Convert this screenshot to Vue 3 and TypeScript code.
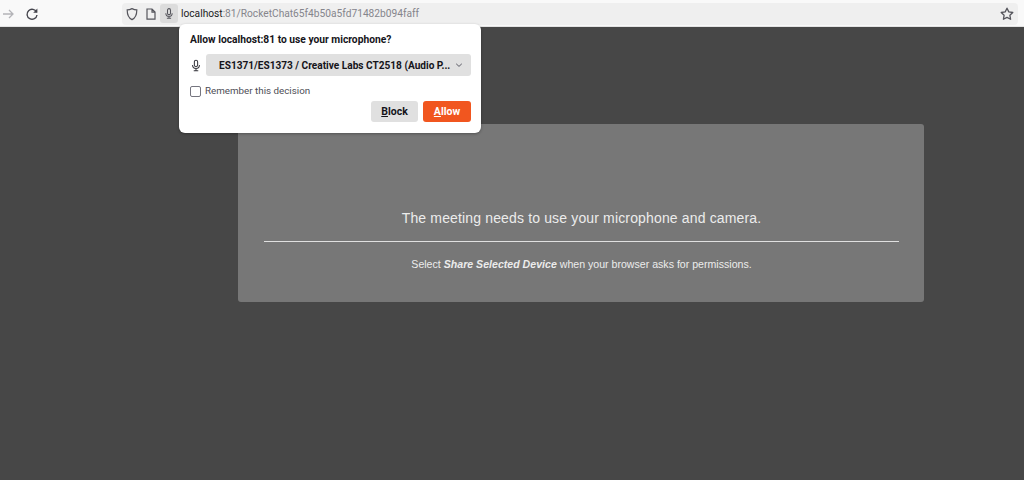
<script setup lang="ts">
const origin = 'localhost'
const path = ':81/RocketChat65f4b50a5fd71482b094faff'
const device = 'ES1371/ES1373 / Creative Labs CT2518 (Audio P...'
</script>

<template>
  <div class="page">
    <header class="toolbar">
      <div class="nav-btns">
        <svg class="icon" width="16" height="16" viewBox="0 0 16 16">
          <path d="M3 8h10M9 4l4 4-4 4" fill="none" stroke="#b4b4b8" stroke-width="1.3" />
        </svg>
        <svg class="icon" width="16" height="16" viewBox="0 0 16 16">
          <path d="M12.6 6.2A5 5 0 1 0 13 9" fill="none" stroke="#45454d" stroke-width="1.4" />
          <path d="M13.4 2.6v4.2H9.2z" fill="#45454d" />
        </svg>
      </div>
      <div class="urlbar">
        <svg class="icon" width="16" height="16" viewBox="0 0 16 16">
          <path d="M8 2.6c1.7.9 3.2 1.3 4.8 1.3 0 4.8-1.3 8-4.8 9.7-3.5-1.7-4.8-4.9-4.8-9.7 1.6 0 3.1-.4 4.8-1.3z" fill="none" stroke="#55555c" stroke-width="1.2" />
        </svg>
        <svg class="icon page-icon" width="16" height="16" viewBox="0 0 16 16">
          <path d="M4 3h5l3 3v7.2H4zM9 3v3.2h3" fill="none" stroke="#55555c" stroke-width="1.2" />
        </svg>
        <span class="mic-box">
          <svg width="12" height="13" viewBox="0 0 16 16">
            <rect x="6" y="1.5" width="4" height="8" rx="2" fill="none" stroke="#55555c" stroke-width="1.4" />
            <path d="M3.8 7.5a4.2 4.2 0 0 0 8.4 0M8 11.8v2.4M5.2 14.4h5.6" fill="none" stroke="#55555c" stroke-width="1.4" />
          </svg>
        </span>
        <span class="url"><span class="host">{{ origin }}</span>{{ path }}</span>
        <svg class="icon star" width="16" height="16" viewBox="0 0 16 16">
          <path d="M8 2.2l1.8 3.7 4 .6-2.9 2.8.7 4L8 11.4l-3.6 1.9.7-4-2.9-2.8 4-.6z" fill="none" stroke="#55555c" stroke-width="1.3" stroke-linejoin="round" />
        </svg>
      </div>
    </header>

    <main class="content">
      <section class="card">
        <h1>The meeting needs to use your microphone and camera.</h1>
        <hr />
        <p>Select <b><i>Share Selected Device</i></b> when your browser asks for permissions.</p>
      </section>
    </main>

    <div class="popup">
      <div class="popup-title">Allow localhost:81 to use your microphone?</div>
      <div class="device-row">
        <svg width="12" height="13" viewBox="0 0 12 16">
          <rect x="4" y="1.5" width="4" height="8" rx="2" fill="none" stroke="#3a3a40" stroke-width="1.3" />
          <path d="M1.8 7.5a4.2 4.2 0 0 0 8.4 0M6 11.8v2.4M3.2 14.4h5.6" fill="none" stroke="#3a3a40" stroke-width="1.3" />
        </svg>
        <div class="select">
          <span>{{ device }}</span>
          <svg width="8" height="8" viewBox="0 0 8 8">
            <path d="M1.2 2.8L4 5.4l2.8-2.6" fill="none" stroke="#5b5b66" stroke-width="1" />
          </svg>
        </div>
      </div>
      <label class="remember"><span class="box"></span>Remember this decision</label>
      <div class="actions">
        <button class="btn"><u>B</u>lock</button>
        <button class="btn primary"><u>A</u>llow</button>
      </div>
    </div>
  </div>
</template>

<style scoped>
.page {
  position: relative;
  width: 1024px;
  height: 480px;
  overflow: hidden;
  background: #474747;
  font-family: Roboto, "Noto Sans", sans-serif;
}

.toolbar {
  display: flex;
  align-items: center;
  height: 27px;
  box-sizing: border-box;
  padding: 2px 6px 1px 0;
  background: #f9f9f9;
  border-bottom: 1px solid #e3e3e3;
}

.nav-btns {
  display: flex;
  align-items: center;
  gap: 8px;
  width: 122px;
}

.icon {
  flex: none;
}

.urlbar {
  flex: 1;
  display: flex;
  align-items: center;
  height: 22px;
  box-sizing: border-box;
  padding: 0 3px 0 2px;
  background: #efefef;
  border-radius: 4px;
}

.page-icon {
  margin-left: 3px;
}

.mic-box {
  display: flex;
  align-items: center;
  justify-content: center;
  width: 18px;
  height: 19px;
  margin-left: 1px;
  background: #dcdcdc;
  border-radius: 3px;
}

.url {
  margin-left: 3px;
  font-size: 10.2px;
  color: #85858c;
  white-space: nowrap;
}

.host {
  color: #1c1b22;
}

.star {
  margin-left: auto;
}

.content {
  padding: 97px 0 0 238px;
}

.card {
  width: 686px;
  height: 178px;
  box-sizing: border-box;
  padding: 85px 25px 0 26px;
  background: #777777;
  border-radius: 3px;
  text-align: center;
  color: #ececec;
  font-family: "Liberation Sans", Arial, sans-serif;
}

h1 {
  margin: 0;
  font-size: 14px;
  font-weight: 400;
  line-height: 18px;
  letter-spacing: 0.15px;
}

hr {
  margin: 14px 0 0;
  height: 1px;
  border: 0;
  background: #e0e0e0;
}

p {
  margin: 15px 0 0;
  font-size: 10.6px;
  line-height: 14px;
}

.popup {
  position: absolute;
  left: 179px;
  top: 24px;
  width: 302px;
  height: 109px;
  box-sizing: border-box;
  padding: 10px 10px 10px 11px;
  background: #fff;
  border-radius: 6px;
  box-shadow: 0 1px 3px rgba(0, 0, 0, 0.3);
  color: #15141a;
}

.popup-title {
  font-size: 10.25px;
  font-weight: 700;
  line-height: 12px;
}

.device-row {
  display: flex;
  align-items: center;
  gap: 4px;
  margin-top: 8px;
}

.select {
  display: flex;
  align-items: center;
  justify-content: space-between;
  width: 265px;
  height: 22px;
  box-sizing: border-box;
  padding: 0 8px 0 13px;
  background: #e0e0e0;
  border-radius: 3px;
  font-size: 10.1px;
  font-weight: 700;
  white-space: nowrap;
}

.remember {
  display: flex;
  align-items: center;
  gap: 4px;
  margin-top: 9px;
  font-size: 9.8px;
  line-height: 12px;
  color: #4e4e56;
}

.box {
  width: 11px;
  height: 11px;
  box-sizing: border-box;
  border: 1px solid #75757f;
  border-radius: 2px;
}

.actions {
  display: flex;
  justify-content: flex-end;
  gap: 5px;
  margin-top: 4px;
}

.btn {
  width: 47px;
  height: 21px;
  padding: 0;
  border: 0;
  border-radius: 3px;
  background: #e0e0e0;
  color: #15141a;
  font-family: inherit;
  font-size: 10.5px;
  font-weight: 700;
}

.primary {
  width: 48px;
  background: #f1561f;
  color: #fff;
}
</style>
